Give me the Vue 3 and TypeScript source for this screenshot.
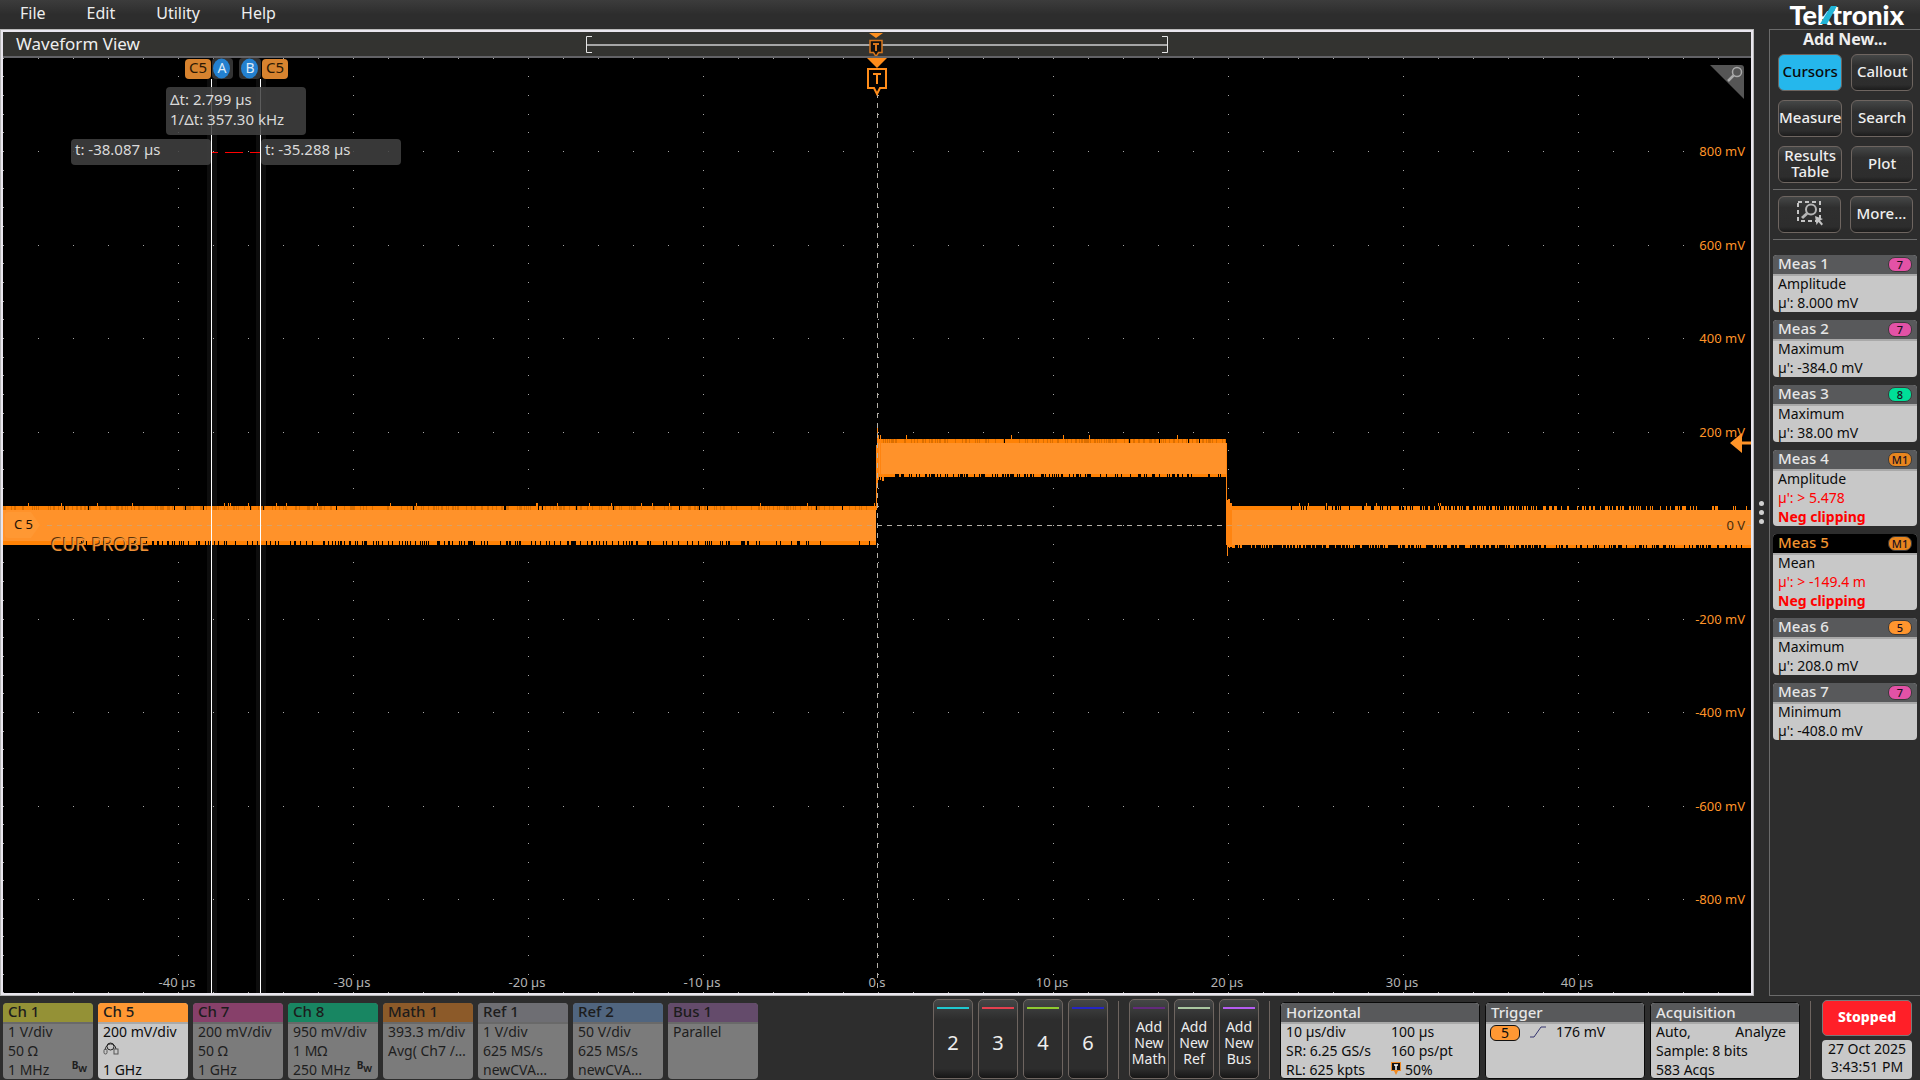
<script setup lang="ts">
interface Channel {
  name: string
  tint: string
  rows: string[]
  bw?: boolean
  active?: boolean
  probe?: boolean
}

interface Measurement {
  name: string
  source: string
  tint: string
  kind: string
  value: string
  clipping?: boolean
  selected?: boolean
}

const menus = ['File', 'Edit', 'Utility', 'Help']

const tools = ['Cursors', 'Callout', 'Measure', 'Search', 'Results Table', 'Plot']

const measurements: Measurement[] = [
  { name: 'Meas 1', source: '7', tint: '#e352a6', kind: 'Amplitude', value: "µ': 8.000 mV" },
  { name: 'Meas 2', source: '7', tint: '#e352a6', kind: 'Maximum', value: "µ': -384.0 mV" },
  { name: 'Meas 3', source: '8', tint: '#00df98', kind: 'Maximum', value: "µ': 38.00 mV" },
  { name: 'Meas 4', source: 'M1', tint: '#e8851e', kind: 'Amplitude', value: "µ': > 5.478", clipping: true },
  { name: 'Meas 5', source: 'M1', tint: '#e8851e', kind: 'Mean', value: "µ': > -149.4 m", clipping: true, selected: true },
  { name: 'Meas 6', source: '5', tint: '#ff952e', kind: 'Maximum', value: "µ': 208.0 mV" },
  { name: 'Meas 7', source: '7', tint: '#e352a6', kind: 'Minimum', value: "µ': -408.0 mV" },
]

const channels: Channel[] = [
  { name: 'Ch 1', tint: '#949136', rows: ['1 V/div', '50 Ω', '1 MHz'], bw: true },
  { name: 'Ch 5', tint: '#ff9833', rows: ['200 mV/div', '', '1 GHz'], active: true, probe: true },
  { name: 'Ch 7', tint: '#87406a', rows: ['200 mV/div', '50 Ω', '1 GHz'] },
  { name: 'Ch 8', tint: '#188662', rows: ['950 mV/div', '1 MΩ', '250 MHz'], bw: true },
  { name: 'Math 1', tint: '#8c5a29', rows: ['393.3 m/div', 'Avg( Ch7 /…'] },
  { name: 'Ref 1', tint: '#6e6e73', rows: ['1 V/div', '625 MS/s', 'newCVA…'] },
  { name: 'Ref 2', tint: '#50657f', rows: ['50 V/div', '625 MS/s', 'newCVA…'] },
  { name: 'Bus 1', tint: '#644b6b', rows: ['Parallel'] },
]

const inactive = [
  { name: '2', tint: '#1fc8cf' },
  { name: '3', tint: '#e3404f' },
  { name: '4', tint: '#8fc92f' },
  { name: '6', tint: '#2525c4' },
]

const adders = [
  { name: 'Add New Math', tint: '#632a7d' },
  { name: 'Add New Ref', tint: '#a9c6a0' },
  { name: 'Add New Bus', tint: '#b45cf0' },
]

// Graticule geometry: 175 units per 10 µs, 93.5 units per 200 mV.
const centerX = 877
const centerY = 525
const voltRows = [-5, -4, -3, -2, -1, 0, 1, 2, 3, 4, 5]
const timeCols = [-5, -4, -3, -2, -1, 0, 1, 2, 3, 4]
const volts = voltRows
  .filter((n) => Math.abs(n) < 5)
  .map((n) => ({ y: centerY + n * 93.5 + 5, label: n === 0 ? '0 V' : `${-n * 200} mV`, zero: n === 0 }))
const times = timeCols
  .filter((n) => n > -5)
  .map((n) => ({ x: centerX + n * 175, label: n === 0 ? '0 s' : `${n * 10} µs` }))

function graticule(): string {
  let d = ''
  for (const row of voltRows) {
    const y = Math.min(992, Math.round(centerY + row * 93.5))
    for (let x = 3; x < 1751; x += 35) d += `M${x} ${y}h1v1h-1z`
  }
  for (const col of timeCols) {
    const x = centerX + 1 + col * 175
    for (let i = -25; i < 25; i++) d += `M${x} ${Math.round(centerY + i * 18.7)}h1v1h-1z`
  }
  return d
}

function generator(seed: number): () => number {
  let s = seed
  return () => {
    s = (s * 1664525 + 1013904223) % 4294967296
    return s / 4294967296
  }
}

// One-unit-wide samples along an edge; density may change from start to end.
function fringe(seed: number, x0: number, x1: number, y: number, h: number, from: number, to = from): string {
  const next = generator(seed)
  let d = ''
  for (let x = x0; x < x1; x++) {
    const p = from + ((to - from) * (x - x0)) / (x1 - x0)
    if (next() < p) d += `M${x} ${y}h1v${h}h-1z`
  }
  return d
}

const dots = graticule()
const edges = [
  fringe(11, 3, 876, 506, 4, 0.97),
  fringe(12, 3, 150, 541, 4, 0.97),
  fringe(32, 150, 876, 541, 4, 0.72, 0.78),
  fringe(13, 3, 876, 503, 3, 0.03),
  fringe(14, 877, 1226, 439, 4, 0.96),
  fringe(15, 877, 1226, 474, 3, 0.6, 0.75),
  fringe(16, 877, 1226, 435, 4, 0.02),
  fringe(17, 1227, 1751, 506, 4, 0.98, 0.1),
  fringe(18, 1227, 1751, 545, 3, 0.15, 0.8),
  fringe(19, 1227, 1500, 503, 3, 0.03),
].join('')
const shade = [
  fringe(21, 3, 876, 506, 4, 0.3),
  fringe(23, 877, 1226, 439, 4, 0.3),
  fringe(24, 1227, 1751, 541, 4, 0.3),
].join('')
</script>

<template>
  <div class="app">
    <header class="menubar">
      <nav class="menus">
        <button v-for="m in menus" :key="m" type="button" class="menu">{{ m }}</button>
      </nav>
      <div class="logo">
        Tektronix
        <svg class="logo-slash" viewBox="0 0 18 20" aria-hidden="true"><path d="M0 20 11 2h6L7 20z" fill="#22b5d8" /></svg>
      </div>
    </header>

    <main class="workspace">
      <section class="scope">
        <div class="scope-head">
          <h1>Waveform View</h1>
          <svg class="overview" viewBox="0 0 584 24" aria-hidden="true">
            <path d="M1 13h582" stroke="#a6a6a6" stroke-width="2" />
            <path d="M7 4.500H1.500V20.500H7M577 4.500h5.500V20.500H577" fill="none" stroke="#e4e4e4" />
            <path d="M284 1h14l-7 5z" fill="#ff9020" />
            <path d="M285 8.500h12v12h-3.500l-2.500 4-2.500-4H285z" fill="#111" stroke="#d9771c" stroke-width="1.500" />
            <path d="M288 12h6M291 12v7" stroke="#d9771c" stroke-width="2" />
          </svg>
        </div>
        <svg class="plot" viewBox="3 58 1748 935" role="img" aria-label="Channel 5 waveform">
          <g fill="#0d0d0d"><path d="M207 79h10v914h-10zM256 79h10v914h-10z" /></g>
          <path :d="dots" fill="#a8a8a8" shape-rendering="crispEdges" />

          <g shape-rendering="crispEdges">
            <path :d="edges" fill="#ff8205" />
            <path :d="shade" fill="#dc6f00" />
            <path d="M3 510h873v31H3zM877 443h349v31H877zM1227 510h524v35h-524z" fill="#ff922a" />
            <path d="M876 445h1v65h-1zM877 428h1v57h-1zM878 435h1v45h-1zM880 435h1v45h-1zM882 474h2v7h-2zM1226 443h1v102h-1zM1227 500h1v56h-1zM1228 499h2v48h-2zM1230 503h2v44h-2z" fill="#ff8410" />
          </g>

          <path d="M47 525.500H876M1227 525.500H1751" stroke="#c8a884" stroke-opacity=".7" stroke-dasharray="5 5" />
          <path d="M877 525.500H1226" stroke="#b4b0a8" stroke-dasharray="5 5" />
          <path d="M877.500 93V993" stroke="#b4b0a8" stroke-dasharray="5 5" />
          <path d="M5 515q0-3 3-3h23l9 13-9 13H8q-3 0-3-3z" fill="#ff9833" />

          <g class="volts">
            <text v-for="v in volts" :key="v.label" x="1745" :y="v.y" :class="{ zero: v.zero }">{{ v.label }}</text>
          </g>
          <g class="times">
            <text v-for="t in times" :key="t.label" :x="t.x" y="987">{{ t.label }}</text>
          </g>

          <text x="14" y="529" class="handle-label">C 5</text>
          <text x="51" y="551" class="probe-label">CUR PROBE</text>

          <path d="M211.500 79V993M260.500 79V993" stroke="#fff" />
          <path d="M212 152.500h6M225 152.500h18M250 152.500h10" stroke="#f00" />

          <rect x="212" y="58" width="21" height="21" rx="4" fill="#333" />
          <rect x="239" y="58" width="22" height="21" rx="4" fill="#333" />
          <rect x="185" y="59" width="26" height="20" rx="4" fill="#d7832f" />
          <rect x="262" y="59" width="26" height="20" rx="4" fill="#d7832f" />
          <ellipse cx="221.500" cy="68.500" rx="8.500" ry="10" fill="#2380cf" />
          <ellipse cx="249.500" cy="68.500" rx="8.500" ry="10" fill="#2380cf" />
          <g class="tags">
            <text x="198" y="73" class="dark">C5</text>
            <text x="222" y="73">A</text>
            <text x="250" y="73">B</text>
            <text x="275" y="73" class="dark">C5</text>
          </g>

          <g fill="#414141" fill-opacity=".86">
            <rect x="166" y="87" width="140" height="48" rx="4" />
            <rect x="71" y="139" width="140" height="26" rx="4" />
            <rect x="261" y="139" width="140" height="26" rx="4" />
          </g>
          <g class="readouts">
            <text x="170" y="105">Δt: 2.799 µs</text>
            <text x="170" y="125">1/Δt: 357.30 kHz</text>
            <text x="75" y="155">t: -38.087 µs</text>
            <text x="265" y="155">t: -35.288 µs</text>
          </g>

          <path d="M867 58h20l-10 10z" fill="#ff8c1a" />
          <path d="M868 69h18v19h-6l-3 6-3-6h-6z" fill="#000" stroke="#ff8c1a" stroke-width="2" />
          <path d="M873 74h8M877 74v10" fill="none" stroke="#ff8c1a" stroke-width="2" />

          <path d="M1710 65h31q3 0 3 3v31z" fill="#555" />
          <circle cx="1737" cy="72" r="4.500" fill="none" stroke="#aaa" stroke-width="1.500" />
          <path d="M1733.500 75.500 1728 81" stroke="#aaa" stroke-width="2.500" />

          <path d="M1730 443 1742 433v8.500h9v3h-9V453z" fill="#ff9428" />
        </svg>
      </section>

      <div class="splitter" aria-hidden="true"><i></i><i></i><i></i></div>

      <aside class="side">
        <h2>Add New...</h2>
        <div class="tools">
          <button v-for="t in tools" :key="t" type="button" class="tool" :class="{ on: t === 'Cursors' }">{{ t }}</button>
        </div>
        <hr />
        <div class="tools">
          <button type="button" class="tool" aria-label="Draw a box to zoom">
            <svg class="zoom-icon" viewBox="0 0 28 26" aria-hidden="true">
              <path d="M2 2h22v19H2z" fill="none" stroke="#c4c4c4" stroke-width="2" stroke-dasharray="4 3" />
              <circle cx="15" cy="9.500" r="5" fill="#2d2d2d" stroke="#b4b4b4" stroke-width="2" />
              <path d="M11 13.500 6 18" stroke="#b4b4b4" stroke-width="3" />
              <path d="M19 16l8 3-3 1.500 3 3.500-1.500 1.500-3-3.500L20.500 25z" fill="#c4c4c4" />
            </svg>
          </button>
          <button type="button" class="tool">More...</button>
        </div>
        <hr />
        <div class="measurements">
          <article v-for="m in measurements" :key="m.name" class="card meas" :class="{ selected: m.selected }">
            <h3>{{ m.name }}<span class="pill" :style="{ background: m.tint }">{{ m.source }}</span></h3>
            <div class="body">
              <p>{{ m.kind }}</p>
              <p :class="{ bad: m.clipping }">{{ m.value }}</p>
              <p v-if="m.clipping" class="bad strong">Neg clipping</p>
            </div>
          </article>
        </div>
      </aside>
    </main>

    <footer class="settings">
      <div class="channels">
        <article v-for="c in channels" :key="c.name" class="card channel" :class="{ active: c.active }">
          <h3 :style="{ background: c.tint }">{{ c.name }}</h3>
          <div class="body">
            <p v-for="(r, i) in c.rows" :key="i">
              <svg v-if="c.probe && i === 1" class="probe" viewBox="0 0 16 14" aria-hidden="true">
                <circle cx="7.500" cy="4.500" r="3.500" fill="none" stroke="#222" />
                <path d="M2 8C3 0 12 0 13 7" fill="none" stroke="#222" />
                <rect x="1" y="7" width="3" height="5" rx="1.500" fill="none" stroke="#555" />
                <rect x="11" y="7" width="4" height="5" fill="none" stroke="#555" />
              </svg>
              <template v-else>{{ r }}</template>
            </p>
            <span v-if="c.bw" class="bw">B<sub>W</sub></span>
          </div>
        </article>
      </div>

      <div class="slots">
        <button v-for="c in inactive" :key="c.name" type="button" class="slot big">
          <i :style="{ background: c.tint }"></i><span>{{ c.name }}</span>
        </button>
      </div>
      <div class="rule"></div>
      <div class="slots">
        <button v-for="c in adders" :key="c.name" type="button" class="slot">
          <i :style="{ background: c.tint }"></i><span>{{ c.name }}</span>
        </button>
      </div>
      <div class="rule"></div>

      <div class="systems">
        <article class="card system horizontal">
          <h3>Horizontal</h3>
          <div class="body pair">
            <p>10 µs/div</p><p>100 µs</p>
            <p>SR: 6.25 GS/s</p><p>160 ps/pt</p>
            <p>RL: 625 kpts</p>
            <p>
              <svg class="trig" viewBox="0 0 10 13" aria-hidden="true">
                <path d="M0 0h10v9H7l-2 4-2-4H0z" fill="#f08a24" /><path d="M1 1h8v7H1z" fill="#111" />
                <path d="M3 3h4M5 3v5" stroke="#fff" stroke-width="1.500" />
              </svg>50%
            </p>
          </div>
        </article>
        <article class="card system trigger">
          <h3>Trigger</h3>
          <div class="body line">
            <span class="source">5</span>
            <svg class="slope" viewBox="0 0 16 12" aria-hidden="true"><path d="M0 11h4L11 1h5" fill="none" stroke="#34346e" /></svg>
            <p>176 mV</p>
          </div>
        </article>
        <article class="card system acquisition">
          <h3>Acquisition</h3>
          <div class="body">
            <p class="split"><span>Auto,</span><span>Analyze</span></p>
            <p>Sample: 8 bits</p>
            <p>583 Acqs</p>
          </div>
        </article>
      </div>
      <div class="rule"></div>
      <div class="status">
        <button type="button" class="stopped">Stopped</button>
        <time class="clock" datetime="2025-10-27T15:43:51">27 Oct 2025<br />3:43:51 PM</time>
      </div>
    </footer>
  </div>
</template>

<style>
body {
  margin: 0;
  background: #2d2d2d;
}
</style>

<style scoped>
.app {
  display: flex;
  flex-direction: column;
  height: 100vh;
  background: #2d2d2d;
  color: #eee;
  font: 14px/19px "Noto Sans", "Open Sans", sans-serif;
}
h1, h2, h3, p {
  margin: 0;
  font-weight: 400;
}
button {
  padding: 0;
  border: 0;
  background: none;
  color: inherit;
  font: inherit;
}
.menubar {
  display: flex;
  flex: none;
  justify-content: space-between;
  height: 29px;
  padding: 0 16px 0 20px;
  background: linear-gradient(#3c3c3c, #2d2d2d 50%);
}
.menus {
  display: flex;
  align-items: flex-start;
  gap: 41px;
}
.menu {
  font-size: 16px;
  line-height: 26px;
}
.logo {
  position: relative;
  color: #fff;
  font: 900 27px/29px Lato, sans-serif;
}
.logo-slash {
  position: absolute;
  left: 31px;
  top: 4px;
  width: 18px;
  height: 20px;
}
.workspace {
  display: flex;
  flex: 1;
  min-height: 0;
}
.scope {
  display: flex;
  flex: 1;
  flex-direction: column;
  min-width: 0;
  box-sizing: border-box;
  border: 3px solid #e9e6ee;
  outline: 1px solid #b9b9b9;
  outline-offset: -1px;
  background: #000;
}
.scope-head {
  position: relative;
  flex: none;
  height: 24px;
  padding-left: 13px;
  border-bottom: 2px solid #626266;
  background: #333330;
}
.scope-head h1 {
  font-size: 17px;
  line-height: 24px;
}
.overview {
  position: absolute;
  top: 0;
  left: 50%;
  width: 584px;
  height: 24px;
  margin-left: -292px;
}
.plot {
  display: block;
  flex: 1;
  width: 100%;
  min-height: 0;
}
.volts text {
  fill: #ff9428;
  font-size: 13px;
  text-anchor: end;
}
.volts .zero {
  fill: #4a2a08;
}
.times text {
  fill: #b4b4b4;
  font-size: 13px;
  text-anchor: middle;
}
.handle-label {
  fill: #1c1206;
  font-size: 13px;
}
.probe-label {
  fill: #f09238;
  font-size: 18px;
  text-shadow: -1px -1px #5a3208;
}
.tags text {
  fill: #dcebf8;
  font-size: 14px;
  text-anchor: middle;
}
.tags .dark {
  fill: #2b1804;
  font-size: 15px;
}
.readouts text {
  fill: #dadada;
  font-size: 15px;
}
.splitter {
  display: flex;
  flex: none;
  flex-direction: column;
  align-items: center;
  justify-content: center;
  gap: 4px;
  width: 15px;
}
.splitter i {
  width: 5px;
  height: 5px;
  border-radius: 50%;
  background: #d0d0d0;
}
.side {
  flex: none;
  box-sizing: border-box;
  width: 151px;
  padding: 0 3px;
  border: solid #6a6a6a;
  border-width: 1px 0 1px 1px;
}
.side h2 {
  padding-bottom: 6px;
  font-size: 16px;
  font-weight: 700;
  line-height: 18px;
  text-align: center;
}
.tools {
  display: grid;
  grid-template-columns: 1fr 1fr;
  gap: 9px;
  padding: 0 4px 0 5px;
}
.tool {
  display: flex;
  align-items: center;
  justify-content: center;
  box-sizing: border-box;
  height: 37px;
  padding-bottom: 3px;
  border: 1px solid #6e6560;
  border-radius: 6px;
  background: linear-gradient(#454747, #2f2f2f 30%, #2d2d2d 85%, #1c1c1c);
  font-size: 15px;
  font-weight: 500;
  line-height: 16px;
}
.tool.on {
  background: #25b7ec;
  color: #0a0a0a;
}
.zoom-icon {
  width: 28px;
  height: 26px;
}
hr {
  margin: 6px 0 6px;
  border: 0;
  border-top: 1px solid #6a6a6a;
}
.measurements {
  display: flex;
  flex-direction: column;
  gap: 8px;
  padding-top: 9px;
}
.card {
  border-radius: 4px;
  background: #c8c8c8;
  color: #0c0c0c;
}
.card h3 {
  display: flex;
  align-items: center;
  justify-content: space-between;
  box-sizing: border-box;
  height: 19px;
  padding: 0 5px;
  border-radius: 4px 4px 0 0;
  background: #58595b;
  color: #e6e6e6;
  font-size: 15px;
  font-weight: 500;
}
.card.meas h3,
.card.channel h3 {
  padding-bottom: 2px;
}
.card .body {
  position: relative;
  padding: 0 5px;
  box-shadow: inset 0 2px #a9a9a9;
}
.card p {
  height: 19px;
  white-space: nowrap;
}
.meas.selected h3 {
  background: #000;
  color: #f29430;
}
.pill {
  box-sizing: border-box;
  width: 24px;
  height: 15px;
  margin-top: 2px;
  border: 1px solid #3a3a3a;
  border-radius: 7px;
  color: #1a1020;
  font-size: 11px;
  line-height: 14px;
  text-align: center;
}
.bad {
  color: #f00;
}
.strong {
  font-weight: 700;
}
.settings {
  display: flex;
  flex: none;
  align-items: flex-end;
  box-sizing: border-box;
  height: 84px;
  padding: 0 8px 1px 3px;
}
.channels {
  display: flex;
  flex: 1;
  gap: 5px;
}
.channel {
  width: 90px;
  height: 76px;
  background: #7b7b7b;
  color: #1e1e1e;
}
.channel h3 {
  color: #1c1c1c;
}
.channel .body {
  box-shadow: inset 0 2px #696969;
}
.channel.active {
  background: #c8c8c8;
  color: #0c0c0c;
}
.channel.active .body {
  box-shadow: inset 0 2px #a9a9a9;
}
.bw {
  position: absolute;
  right: 6px;
  bottom: 7px;
  font-size: 10px;
  font-weight: 700;
  line-height: 14px;
}
.bw sub {
  font-size: 9px;
  line-height: 0;
}
.probe {
  width: 16px;
  height: 14px;
}
.slots {
  display: flex;
  gap: 5px;
}
.slot {
  display: flex;
  flex-direction: column;
  align-items: center;
  box-sizing: border-box;
  width: 40px;
  height: 80px;
  padding: 7px 0 2px;
  border: 1px solid #6e6560;
  border-radius: 5px;
  background: linear-gradient(#454747, #2d2d2d 25%, #2d2d2d 88%, #161616);
  line-height: 16px;
}
.slot i {
  width: 32px;
  height: 2px;
}
.slot span {
  display: flex;
  flex: 1;
  align-items: center;
}
.slot.big {
  font-size: 20px;
}
.rule {
  width: 1px;
  height: 78px;
  margin: 0 10px;
  background: #6e6560;
}
.systems {
  display: flex;
  gap: 5px;
}
.system {
  box-sizing: border-box;
  height: 77px;
  border: 1px solid #0a0a0a;
}
.horizontal {
  width: 200px;
}
.trigger {
  width: 160px;
}
.acquisition {
  width: 150px;
}
.pair {
  display: grid;
  grid-template-columns: 105px 1fr;
}
.trig {
  width: 10px;
  height: 13px;
  margin-right: 4px;
}
.card .line {
  display: flex;
  align-items: center;
  gap: 10px;
  padding: 0 4px;
}
.source {
  box-sizing: border-box;
  width: 30px;
  height: 16px;
  margin-top: 2px;
  border: 1px solid #111;
  border-radius: 6px;
  background: #ff9833;
  line-height: 14px;
  text-align: center;
}
.slope {
  width: 16px;
  height: 12px;
}
.split {
  display: flex;
  justify-content: space-between;
  padding-right: 8px;
}
.status {
  display: flex;
  flex-direction: column;
  gap: 4px;
  width: 90px;
  margin-left: 1px;
}
.stopped {
  box-sizing: border-box;
  height: 36px;
  padding-bottom: 4px;
  border: 1px solid #7a7a7a;
  border-radius: 5px;
  background: #ff1f28;
  color: #fff;
  font-weight: 800;
}
.clock {
  height: 39px;
  border-radius: 4px;
  background: #c8c8c8;
  color: #0c0c0c;
  line-height: 18px;
  text-align: center;
}
</style>
